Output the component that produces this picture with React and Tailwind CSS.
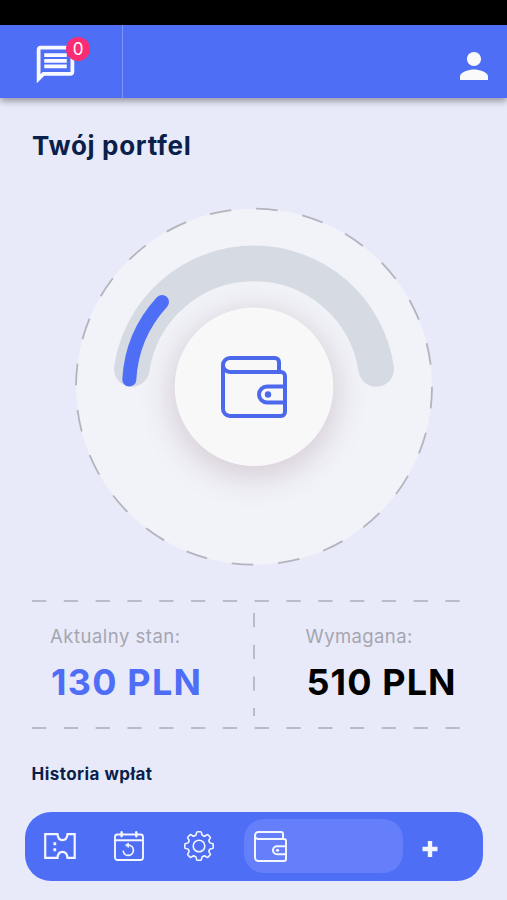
import React from 'react';
import { MdOutlineMessage, MdPerson } from 'react-icons/md';

const FONT = "font-['Inter','Liberation_Sans',sans-serif]";

function WalletIcon({ className, strokeWidth = 4 }) {
    return (
        <svg viewBox="0 0 66 62" className={className} fill="none" stroke="currentColor" strokeWidth={strokeWidth} strokeLinejoin="round">
            <path d="M58 16V6a4 4 0 0 0-4-4H9a7 7 0 0 0 0 14h51a4 4 0 0 1 4 4v36a4 4 0 0 1-4 4H9a7 7 0 0 1-7-7V9" />
            <path d="M64 30.500H46a8 8 0 0 0 0 16h18" />
            <circle cx="47" cy="38.500" r="3.200" fill="currentColor" stroke="none" />
        </svg>
    );
}

function TicketIcon() {
    return (
        <svg viewBox="0 0 32 26" className="w-8 h-[26px]" fill="none" stroke="currentColor" strokeWidth="2.200">
            <path d="M1.200 1.200H13.500C14.200 9.200 22.800 9.200 23.500 1.200H30.700V24.800H23.500C22.800 16.800 14.200 16.800 13.500 24.800H1.200Z" />
            <path d="M10.800 9.300v3M10.800 15.200v3" strokeWidth="2.800" />
        </svg>
    );
}

function CalendarIcon() {
    return (
        <svg viewBox="0 0 30 30" className="w-[30px] h-[30px]" fill="none" stroke="currentColor" strokeWidth="1.900" strokeLinecap="round">
            <rect x="1" y="3.500" width="28" height="25.500" rx="2.500" />
            <path d="M1 9.300h28" />
            <path d="M7.600 1.200v4M22.300 1.200v4" strokeWidth="2.400" />
            <path d="M9.300 20.300a5.100 5.100 0 1 0 5-6.100" strokeWidth="1.700" />
            <path d="M11.600 14l2.900-1.900v4z" fill="currentColor" strokeWidth="0.800" strokeLinejoin="round" />
        </svg>
    );
}

const TEETH = [0, 45, 90, 135, 180, 225, 270, 315];

function GearIcon() {
    return (
        <svg viewBox="-15 -15 30 30" className="w-[30px] h-[30px]" fill="none" stroke="currentColor" strokeWidth="1.600" strokeLinecap="round" strokeLinejoin="round">
            {TEETH.map(a => (
                <path key={a} transform={`rotate(${a})`} d="M-4.300-10.300Q-2.900-10.500-2.700-11.800L-2.500-13.300Q-2.300-14.200-1.500-14.200H1.500Q2.300-14.200 2.500-13.300L2.700-11.800Q2.900-10.500 4.300-10.300" />
            ))}
            <circle r="5.800" />
        </svg>
    );
}

function Header() {
    return (
        <header className="h-[73px] shrink-0 bg-[#4f6ef6] flex items-center justify-between shadow-[0_3px_7px_rgba(0,0,0,0.38)]">
            <div className="w-[123px] h-full border-r border-[#7e95f8] pl-[33px] pt-[17px] text-[#f8f9ff]">
                <div className="relative w-[45px]">
                    <MdOutlineMessage size={45} />
                    <span className="absolute left-[33px] -top-[5px] w-6 h-6 rounded-full bg-[#fb2c74] text-white text-[17px] leading-6 text-center">0</span>
                </div>
            </div>
            <MdPerson size={42} className="mr-3 mt-2 text-[#fafafa]" />
        </header>
    );
}

function Gauge() {
    return (
        <div className="mx-auto mt-[45px] w-[360px] h-[360px] grid place-items-center">
            <svg viewBox="74 207 360 360" className="col-start-1 row-start-1 w-[360px] h-[360px]" fill="none">
                <defs>
                    <filter id="soft" x="-50%" y="-50%" width="200%" height="200%">
                        <feGaussianBlur stdDeviation="15" />
                    </filter>
                </defs>
                <circle cx="254" cy="386.700" r="178" fill="#f1f3f8" />
                <circle cx="254" cy="386.700" r="178" stroke="#b3b4bd" strokeWidth="1.800" strokeDasharray="21.700 25" />
                <circle cx="254" cy="394" r="84" fill="#a07a90" opacity="0.300" filter="url(#soft)" />
                <path d="M131.800 369A123.500 123.500 0 0 1 376.200 369" stroke="#d6dae2" strokeWidth="35.600" strokeLinecap="round" />
                <path d="M129.300 379.500A125 125 0 0 1 162 302" stroke="#4f6ef6" strokeWidth="14" strokeLinecap="round" />
                <circle cx="254" cy="386.700" r="79.300" fill="#f8f8f9" />
            </svg>
            <WalletIcon className="col-start-1 row-start-1 w-[66px] h-[62px] text-[#4c69ec]" />
        </div>
    );
}

function DashedLine({ className }) {
    return (
        <svg className={className} viewBox="0 0 428 2">
            <path d="M0 1H428" stroke="#bbbcc8" strokeWidth="2" strokeDasharray="14.300 17.500" />
        </svg>
    );
}

function Balance() {
    return (
        <section className="ml-[31.5px] mt-[32.5px] w-[428px]">
            <DashedLine className="block w-[428px] h-[2px]" />
            <div className="h-[125px] flex">
                <div className="w-[221.5px] pl-[18.5px] pt-[22px]">
                    <p className="text-[18.5px] leading-6 tracking-[0.5px] text-[#a5a6b0]">Aktualny stan:</p>
                    <p className="ml-px mt-[12px] text-[36px] leading-11 font-bold tracking-[1.2px] text-[#4f6ef6]">130 PLN</p>
                </div>
                <svg className="mt-[11px] w-[2px] h-[103px]" viewBox="0 0 2 103">
                    <path d="M1 0V103" stroke="#bbbcc8" strokeWidth="2" strokeDasharray="14.300 17.400" />
                </svg>
                <div className="pl-[50.5px] pt-[22px] whitespace-nowrap">
                    <p className="text-[18.5px] leading-6 tracking-[0.4px] text-[#a5a6b0]">Wymagana:</p>
                    <p className="ml-px mt-[12px] text-[36px] leading-11 font-bold tracking-[1.1px] text-black">510 PLN</p>
                </div>
            </div>
            <DashedLine className="block w-[428px] h-[2px]" />
        </section>
    );
}

function BottomNav() {
    return (
        <nav className="mx-[25px] mt-[26px] w-[458px] h-[69px] rounded-[26px] bg-[#4f6ef6] flex items-center text-[#f3f5ff]">
            <div className="ml-[19px]"><TicketIcon /></div>
            <div className="ml-[38px]"><CalendarIcon /></div>
            <div className="ml-10"><GearIcon /></div>
            <div className="ml-[30px] w-[159px] h-[54px] rounded-[20px] bg-[#657ffa] flex items-center pl-[9.5px]">
                <WalletIcon className="w-[33px] h-[31px]" strokeWidth={4} />
            </div>
            <svg viewBox="0 0 16 16" className="ml-[19px] mt-[5px] w-4 h-4" stroke="currentColor" strokeWidth="4.400">
                <path d="M8 0V16M0.500 8H15.500" />
            </svg>
        </nav>
    );
}

export default function App() {
    return (
        <div className={`w-[507px] h-[900px] overflow-hidden bg-[#e8eafa] flex flex-col ${FONT}`}>
            <div className="h-[25px] shrink-0 bg-black" />
            <Header />
            <h1 className="ml-8 mt-[32px] text-[26px] leading-8 font-bold tracking-[0.7px] text-[#0a1f4a]">Twój portfel</h1>
            <Gauge />
            <Balance />
            <h2 className="ml-[31.5px] mt-[33px] text-[17px] leading-6 font-bold tracking-[0.45px] text-[#0a1f4a]">Historia wpłat</h2>
            <BottomNav />
        </div>
    );
}
